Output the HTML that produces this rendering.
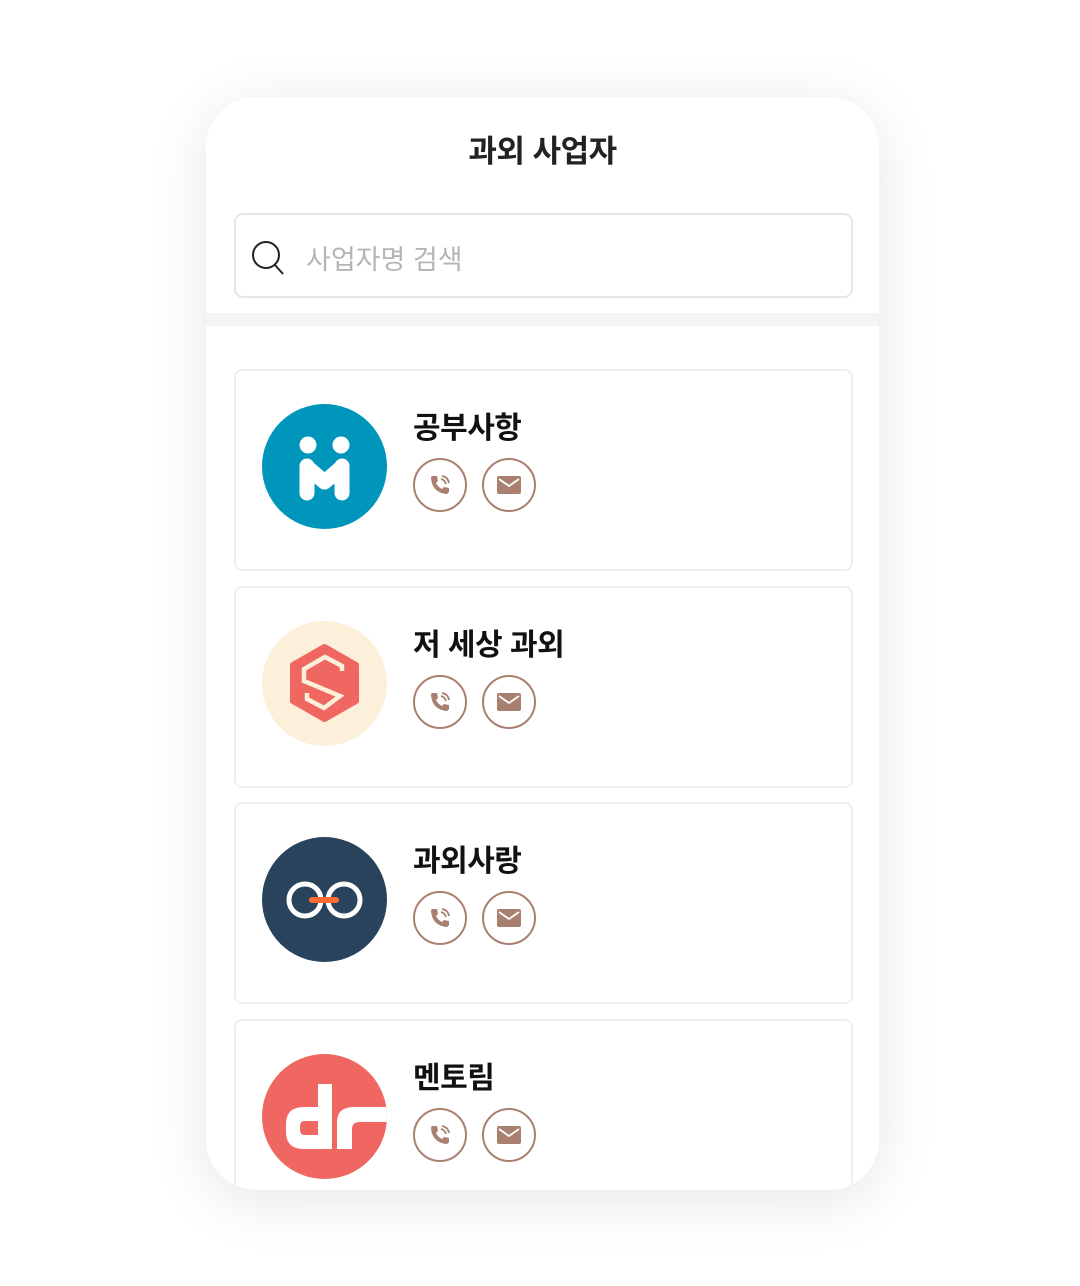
<!DOCTYPE html>
<html><head><meta charset="utf-8">
<style>
*{margin:0;padding:0;box-sizing:border-box}
html,body{width:1080px;height:1286px;background:#fff;overflow:hidden;font-family:"Liberation Sans","Noto Sans CJK KR",sans-serif}
.panel{position:absolute;left:206px;top:97px;width:673px;height:1093px;background:#fff;border-radius:50px;box-shadow:0 10px 60px rgba(0,0,0,0.10);overflow:hidden}
.title{position:absolute;top:29px;left:0;width:100%;text-align:center;font-size:31px;font-weight:700;color:#222;letter-spacing:-0.5px}
.search{position:absolute;left:28px;top:116px;width:619px;height:85px;border:2px solid #e6e6e6;border-radius:9px}
.search svg{position:absolute;left:14px;top:24px}
.search span{position:absolute;left:70px;top:23px;font-size:27px;color:#b5b5b5}
.band{position:absolute;left:0;top:216px;width:100%;height:13px;background:#f4f4f4}
.card{position:absolute;left:28px;width:619px;height:202px;border:2px solid #eeeeee;border-radius:8px}
.logo{position:absolute;left:26px;top:33px;width:125px;height:125px;border-radius:50%;overflow:hidden}
.name{position:absolute;left:177px;top:32px;font-size:30px;font-weight:700;color:#111;letter-spacing:-0.5px}
.btn{position:absolute;top:87px;width:54px;height:54px;border:2px solid #a9806f;border-radius:50%;display:flex;align-items:center;justify-content:center}
</style></head><body>
<div class="panel">
 <div class="title">과외 사업자</div>
 <div class="search">
  <svg width="38" height="38" viewBox="0 0 38 38"><circle cx="16" cy="16" r="13" fill="none" stroke="#222" stroke-width="2"/><line x1="25" y1="26" x2="33" y2="35" stroke="#222" stroke-width="2"/></svg>
  <span>사업자명 검색</span>
 </div>
 <div class="band"></div>

 <div class="card" style="top:272px">
  <div class="logo" style="background:#0096bc">
   <svg width="125" height="125" viewBox="0 0 125 125"><circle cx="46" cy="41" r="8.5" fill="#fff"/><circle cx="79" cy="41" r="8.5" fill="#fff"/><path d="M45 62 L45 89 M80 62 L80 89 M45 63 L62.5 78 L80 63" fill="none" stroke="#fff" stroke-width="15" stroke-linecap="round" stroke-linejoin="round"/></svg>
  </div>
  <div class="name">공부사항</div>
  <div class="btn" style="left:177px"><svg width="24" height="24" viewBox="0 0 24 24"><path d="M5 3 L9 3 L10 8 L8 10 Q10 14 14 16 L16 14 L21 15 L21 19 Q20 21 18 21 Q4 19 3 5 Q3 3 5 3Z" fill="#a9806f"/><path d="M14 3 Q20 4 21 10 M13 6 Q17 7 18 11" fill="none" stroke="#a9806f" stroke-width="1.8"/></svg></div>
  <div class="btn" style="left:246px"><svg width="26" height="22" viewBox="0 0 26 22"><rect x="1" y="2" width="24" height="18" rx="2" fill="#a9806f"/><path d="M3 5 L13 12 L23 5" fill="none" stroke="#fff" stroke-width="1.8"/></svg></div>
 </div>

 <div class="card" style="top:489px">
  <div class="logo" style="background:#fdf0da">
   <svg width="125" height="125" viewBox="0 0 125 125"><path d="M62.5 26 L94 44 L94 80 L62.5 98 L31 80 L31 44Z" fill="#f06660" stroke="#f06660" stroke-width="6" stroke-linejoin="round"/><path d="M80 50 L80 45 L63 36 L42 48 L42 60 L78 75 L62 87 L45 78 L45 72" fill="none" stroke="#fdf0da" stroke-width="4.5"/></svg>
  </div>
  <div class="name">저 세상 과외</div>
  <div class="btn" style="left:177px"><svg width="24" height="24" viewBox="0 0 24 24"><path d="M5 3 L9 3 L10 8 L8 10 Q10 14 14 16 L16 14 L21 15 L21 19 Q20 21 18 21 Q4 19 3 5 Q3 3 5 3Z" fill="#a9806f"/><path d="M14 3 Q20 4 21 10 M13 6 Q17 7 18 11" fill="none" stroke="#a9806f" stroke-width="1.8"/></svg></div>
  <div class="btn" style="left:246px"><svg width="26" height="22" viewBox="0 0 26 22"><rect x="1" y="2" width="24" height="18" rx="2" fill="#a9806f"/><path d="M3 5 L13 12 L23 5" fill="none" stroke="#fff" stroke-width="1.8"/></svg></div>
 </div>

 <div class="card" style="top:705px">
  <div class="logo" style="background:#29435c">
   <svg width="125" height="125" viewBox="0 0 125 125"><circle cx="43" cy="63" r="16" fill="none" stroke="#fff" stroke-width="5"/><circle cx="82" cy="63" r="16" fill="none" stroke="#fff" stroke-width="5"/><line x1="50" y1="63" x2="74" y2="63" stroke="#ff6a33" stroke-width="6" stroke-linecap="round"/></svg>
  </div>
  <div class="name">과외사랑</div>
  <div class="btn" style="left:177px"><svg width="24" height="24" viewBox="0 0 24 24"><path d="M5 3 L9 3 L10 8 L8 10 Q10 14 14 16 L16 14 L21 15 L21 19 Q20 21 18 21 Q4 19 3 5 Q3 3 5 3Z" fill="#a9806f"/><path d="M14 3 Q20 4 21 10 M13 6 Q17 7 18 11" fill="none" stroke="#a9806f" stroke-width="1.8"/></svg></div>
  <div class="btn" style="left:246px"><svg width="26" height="22" viewBox="0 0 26 22"><rect x="1" y="2" width="24" height="18" rx="2" fill="#a9806f"/><path d="M3 5 L13 12 L23 5" fill="none" stroke="#fff" stroke-width="1.8"/></svg></div>
 </div>

 <div class="card" style="top:922px">
  <div class="logo" style="background:#f06660">
   <svg width="125" height="125" viewBox="0 0 125 125"><path d="M24 70 Q24 53 42 53 L56 53 L56 30 L70 30 L70 95 L42 95 Q24 95 24 78Z M42 67 Q38 67 38 74 Q38 81 42 81 L56 81 L56 67Z" fill="#fff" fill-rule="evenodd"/><path d="M75 95 L75 68 Q75 53 92 53 L125 53 L125 68 L98 68 Q90 68 90 75 L90 95Z" fill="#fff"/></svg>
  </div>
  <div class="name">멘토림</div>
  <div class="btn" style="left:177px"><svg width="24" height="24" viewBox="0 0 24 24"><path d="M5 3 L9 3 L10 8 L8 10 Q10 14 14 16 L16 14 L21 15 L21 19 Q20 21 18 21 Q4 19 3 5 Q3 3 5 3Z" fill="#a9806f"/><path d="M14 3 Q20 4 21 10 M13 6 Q17 7 18 11" fill="none" stroke="#a9806f" stroke-width="1.8"/></svg></div>
  <div class="btn" style="left:246px"><svg width="26" height="22" viewBox="0 0 26 22"><rect x="1" y="2" width="24" height="18" rx="2" fill="#a9806f"/><path d="M3 5 L13 12 L23 5" fill="none" stroke="#fff" stroke-width="1.8"/></svg></div>
 </div>
</div>
</body></html>
